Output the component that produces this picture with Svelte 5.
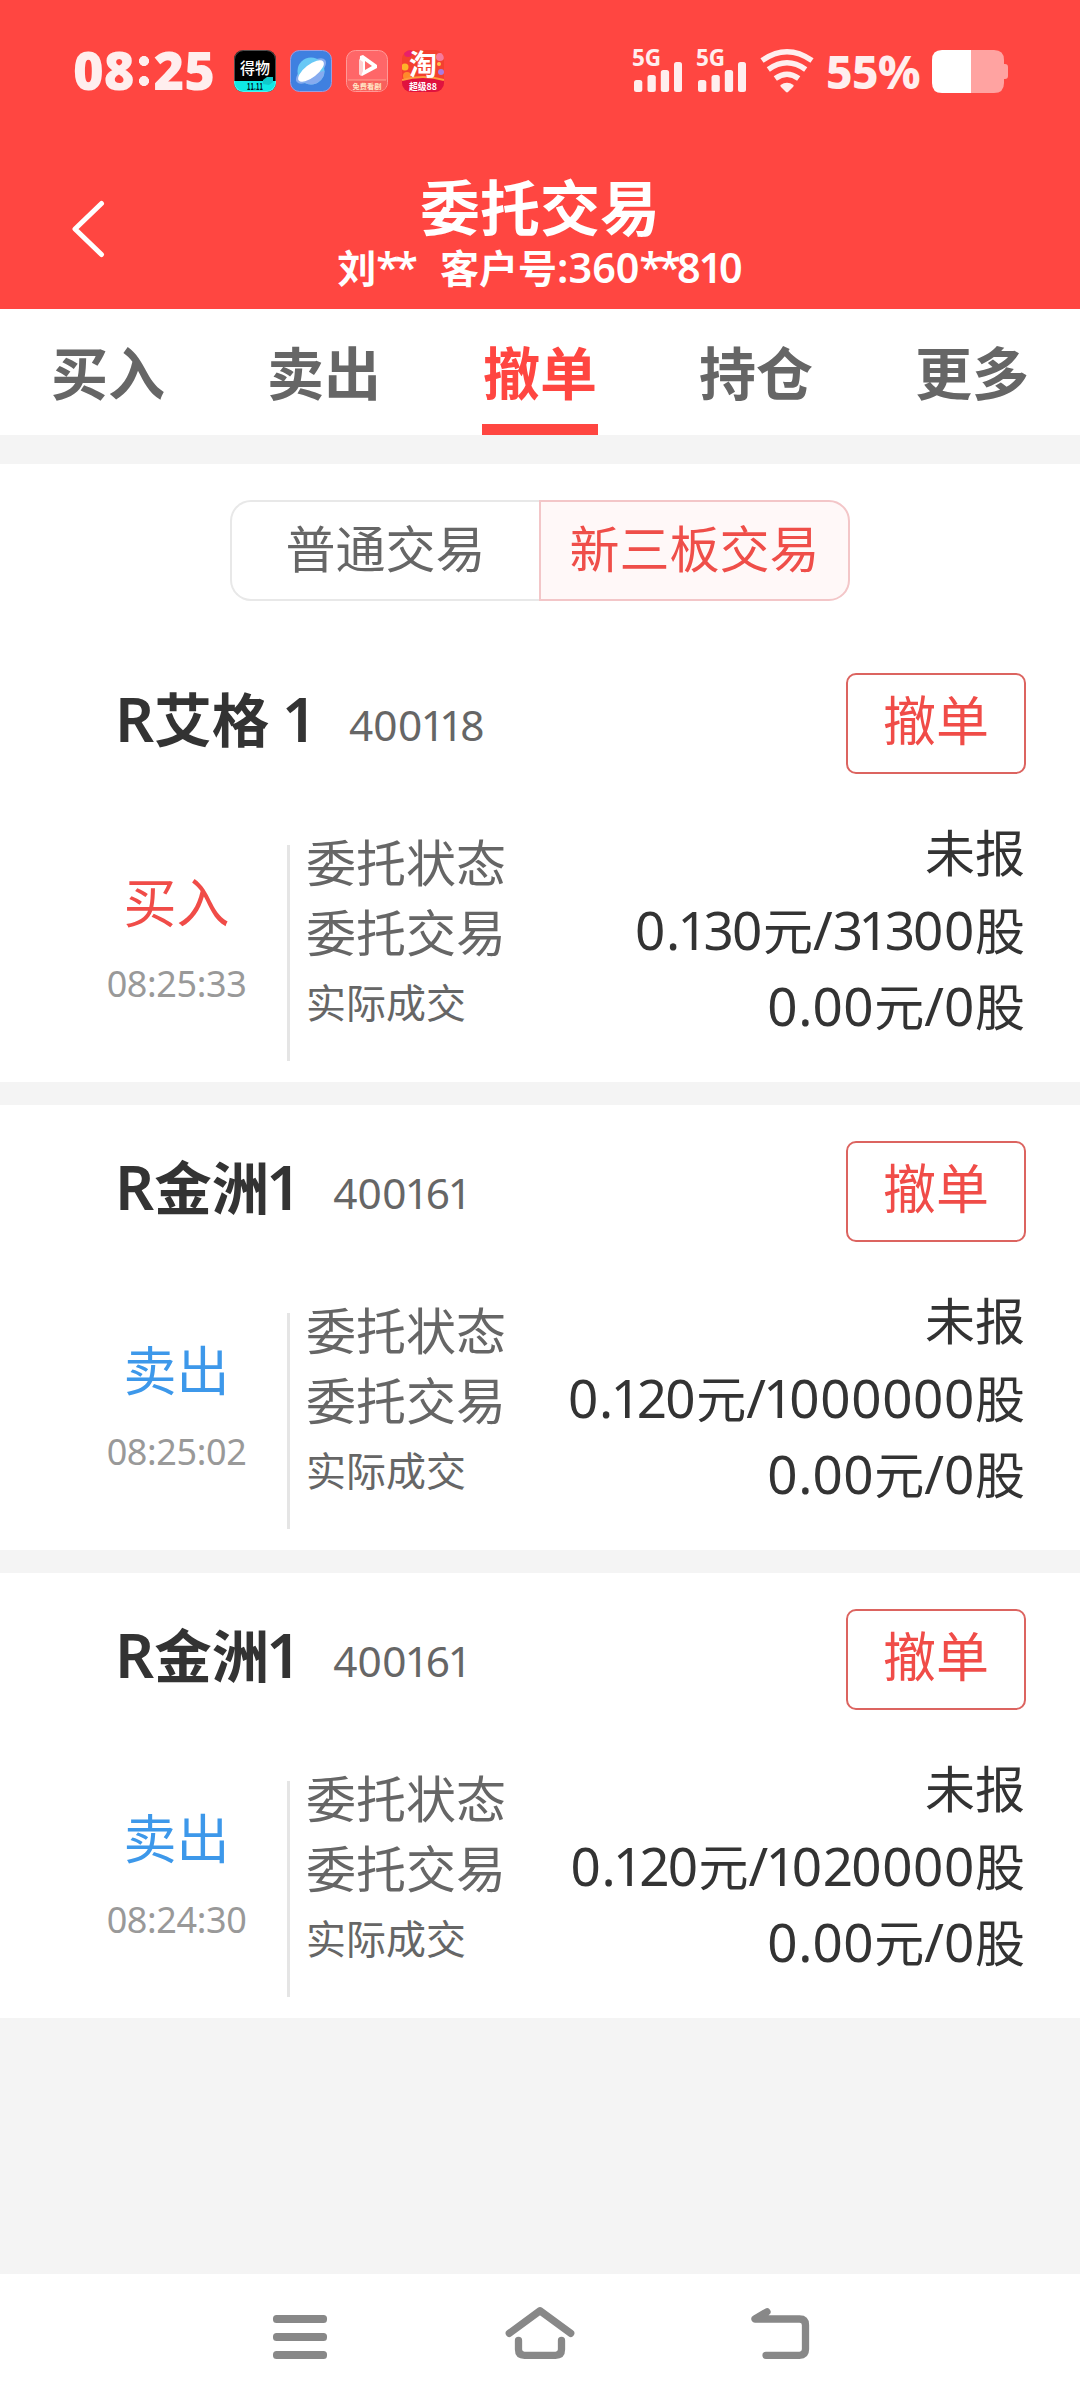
<script>
  const tabs = ['买入', '卖出', '撤单', '持仓', '更多'];
  let activeTab = $state('撤单');
  let market = $state('新三板交易');

  const orders = [
    { name: 'R艾格 1', code: '400118', side: '买入', time: '08:25:33', status: '未报', order: '0.130元/31300股', deal: '0.00元/0股' },
    { name: 'R金洲1', code: '400161', side: '卖出', time: '08:25:02', status: '未报', order: '0.120元/1000000股', deal: '0.00元/0股' },
    { name: 'R金洲1', code: '400161', side: '卖出', time: '08:24:30', status: '未报', order: '0.120元/1020000股', deal: '0.00元/0股' }
  ];

  const kinds = { '1': 'one', '0': 'zero', '2': 'mid', '3': 'mid', '*': 'star' };

  // Splits a string into runs so Latin digits can be set slightly larger than the Han text,
  // and the figures can be given proportional spacing.
  function runs(text) {
    return (text.match(/1+|0+|[23]+|\*+|[\x20-\x29\x2b-\x2f\x34-\x7e]+|[^\x20-\x7e]+/g) ?? []).map((t) => ({
      t,
      kind: kinds[t[0]] ?? (t.charCodeAt(0) < 128 ? 'lat' : 'han')
    }));
  }
</script>

{#snippet mixed(text)}{#each runs(text) as r}<span class={r.kind}>{r.t}</span>{/each}{/snippet}

{#snippet signal()}
  <span class="signal">
    <b>5G</b>
    <svg width="48" height="30" viewBox="0 0 48 30" fill="#ffeeee">
      <rect x="0" y="18" width="8.3" height="12" rx="2.5" />
      <rect x="13.5" y="13" width="8.3" height="17" rx="2.5" />
      <rect x="26.8" y="8" width="8.3" height="22" rx="2.5" />
      <rect x="40" y="0" width="8" height="30" rx="2.5" />
    </svg>
  </span>
{/snippet}

<div class="screen">
  <header>
    <div class="status">
      <span class="clock">08<i></i>25</span>
      <div class="apps">
        <svg width="42" height="42" viewBox="0 0 42 42">
          <defs><clipPath id="c1"><rect width="42" height="42" rx="9" /></clipPath></defs>
          <g clip-path="url(#c1)">
            <rect width="42" height="42" fill="#000" />
            <rect y="31" width="42" height="11" fill="#0fe9e6" />
            <path d="M29 30l4-3 6 0v5l-4 3-6-1z" fill="#11c9cc" />
          </g>
          <text x="21" y="23.500" class="han-icon light" font-size="16" fill="#fff" textLength="30" lengthAdjust="spacingAndGlyphs">得物</text>
          <text x="21" y="39.500" class="han-icon" font-size="9.500" fill="#012" textLength="16" lengthAdjust="spacingAndGlyphs">11.11</text>
          <rect x=".5" y=".5" width="41" height="41" rx="9" fill="none" stroke="#fff" stroke-opacity=".3" />
        </svg>
        <svg width="42" height="42" viewBox="0 0 42 42">
          <rect x=".5" y=".5" width="41" height="41" rx="9" fill="#3f80e0" stroke="#9a9ce0" />
          <ellipse cx="21" cy="21" rx="18" ry="8" transform="rotate(-38 21 21)" fill="#86abef" />
          <circle cx="21" cy="21" r="13.5" fill="#68c8f5" />
          <path d="M8.5 26a13.5 13.5 0 0 0 26-5z" fill="#86abef" />
          <ellipse cx="21" cy="21" rx="15.5" ry="6.500" transform="rotate(-38 21 21)" fill="#fff" />
        </svg>
        <svg width="42" height="42" viewBox="0 0 42 42">
          <rect x=".5" y=".5" width="41" height="41" rx="9" fill="#ff6668" stroke="#ff9a98" />
          <path d="M1 30h40v3a8 8 0 0 1-8 8H9a8 8 0 0 1-8-8z" fill="#f8605c" />
          <path d="M2 30h38" stroke="#ffb0a0" stroke-width=".8" />
          <path d="M14 6l3-1 14 10v3L16 26l-3-2z" fill="#fff" />
          <path d="M19 11v9l7-4z" fill="#ff6a6c" />
          <path d="M13 24V9l4 3v9l-2 5z" fill="#ffd0d2" />
          <text x="21" y="38.500" class="han-icon" font-size="7.200" fill="#ffe8c8">免费看剧</text>
        </svg>
        <svg width="42" height="42" viewBox="0 0 42 42">
          <defs><clipPath id="c4"><rect width="42" height="42" rx="9" /></clipPath></defs>
          <g clip-path="url(#c4)">
            <rect width="42" height="42" fill="#f4402f" />
            <circle cx="6" cy="3" r="4" fill="#e8206a" />
            <circle cx="3" cy="17" r="3.500" fill="#ffb429" />
            <circle cx="38" cy="7" r="4" fill="#f77a9a" />
            <circle cx="39" cy="22" r="3" fill="#a97be0" />
            <circle cx="5" cy="26" r="4" fill="#ff8a2a" />
            <circle cx="37" cy="14" r="2" fill="#ffc04a" />
            <path d="M0 30q21-6 42 0v12H0z" fill="#e0123f" />
            <path d="M0 30q21-6 42 0" fill="none" stroke="#ff9b3e" stroke-width="2" />
          </g>
          <text x="21" y="25" class="han-icon" font-size="28" fill="#fff">淘</text>
          <text x="21" y="40" class="han-icon" font-size="9.500" fill="#fff" textLength="28" lengthAdjust="spacingAndGlyphs">超级88</text>
        </svg>
      </div>
      <div class="sys">
        {@render signal()}
        {@render signal()}
        <svg class="wifi" width="54" height="44" viewBox="0 0 54 44" fill="none" stroke="#ffeeee" stroke-width="5.4">
          <path d="M2 11.5Q27-6.2 52 11.5" />
          <path d="M8.3 20.5Q27 7.2 45.7 20.5" />
          <path d="M15.3 29.5Q27 21 38.700 29.5" />
          <path d="M20.500 36Q27 31.500 33.500 36Q34 37 33 38L28 43Q27 43.800 26 43L21 38Q20 37 20.500 36z" fill="#ffeeee" stroke="none" />
        </svg>
        <span class="pct">55%</span>
        <svg class="batt" width="76" height="43" viewBox="0 0 76 43">
          <path d="M39 0h23q10 0 10 10v4h1q3 0 3 3v9q0 3-3 3h-1v4q0 10-10 10H39z" fill="#ffa3a1" />
          <path d="M39 0H10Q0 0 0 10v23q0 10 10 10h29z" fill="#fff" />
        </svg>
      </div>
    </div>
    <div class="titlebar">
      <button class="back" aria-label="返回">
        <svg width="34" height="58" viewBox="0 0 34 58" fill="none" stroke="#fff" stroke-width="5" stroke-linecap="round" stroke-linejoin="round">
          <path d="M30.500 3.500L4 29l26.500 25.500" />
        </svg>
      </button>
      <div class="titles">
        <h1>委托交易</h1>
        <p>{@render mixed('刘**')}<span class="acct">{@render mixed('客户号:360**810')}</span></p>
      </div>
    </div>
  </header>

  <nav class="tabs">
    {#each tabs as t}
      <button class:active={t === activeTab} onclick={() => (activeTab = t)}><span>{t}</span></button>
    {/each}
  </nav>

  <main>
    <div class="switch">
      {#each ['普通交易', '新三板交易'] as m}
        <button class:on={m === market} onclick={() => (market = m)}>{m}</button>
      {/each}
    </div>

    {#each orders as o}
      <article>
        <div class="head">
          <h2>{@render mixed(o.name)}</h2>
          <span class="code">{@render mixed(o.code)}</span>
          <button class="cancel">撤单</button>
        </div>
        <div class="body">
          <div class="side">
            <strong class:sell={o.side === '卖出'}>{o.side}</strong>
            <time>{o.time}</time>
          </div>
          <div class="rule"></div>
          <div class="labels">
            <span>委托状态</span>
            <span>委托交易</span>
            <span class="small">实际成交</span>
          </div>
          <div class="values">
            <span>{o.status}</span>
            <span>{@render mixed(o.order)}</span>
            <span>{@render mixed(o.deal)}</span>
          </div>
        </div>
      </article>
    {/each}
  </main>

  <footer>
    <svg width="80" height="60" viewBox="260 2300 80 60" fill="#888">
      <rect x="273" y="2315" width="54" height="8" rx="3.500" />
      <rect x="273" y="2333" width="54" height="8" rx="3.500" />
      <rect x="273" y="2351" width="54" height="8" rx="3.500" />
    </svg>
    <svg width="80" height="60" viewBox="500 2300 80 60" fill="none" stroke="#888" stroke-width="7.300" stroke-linecap="round" stroke-linejoin="round">
      <path d="M509.300 2333.300L540 2310.800l30.700 22.500" />
      <path d="M518.500 2340.500v9q0 5.800 6 5.800h31q6 0 6-5.800v-9" />
    </svg>
    <svg width="80" height="60" viewBox="740 2300 80 60" fill="none" stroke="#888" stroke-width="7.300" stroke-linecap="round" stroke-linejoin="round">
      <path d="M767 2311.800L755 2319h44.500q6 0 6 6v24.300q0 6-6 6H766" />
    </svg>
  </footer>
</div>

<style>
  :global(body) { margin: 0; }
  .screen {
    width: 1080px;
    height: 2400px;
    display: flex;
    flex-direction: column;
    background: #f4f4f4;
    font-family: 'Noto Sans', 'Noto Sans CJK SC', sans-serif;
    color: #333;
    overflow: hidden;
  }
  button {
    font: inherit;
    border: 0;
    padding: 0;
    margin: 0;
    background: none;
    color: inherit;
  }
  h1, h2, p { margin: 0; }
  svg { display: block; flex: none; overflow: visible; }
  .lat, .one, .zero, .mid, .star { font-size: 1.06em; }
  .one { margin-left: -0.05em; letter-spacing: -0.13em; margin-right: 0.05em; }
  .zero { letter-spacing: 0.012em; }
  .mid { letter-spacing: -0.035em; }
  .star { letter-spacing: -0.09em; }

  header { height: 309px; background: #ff4641; color: #fff; flex: none; }
  .status {
    height: 142px;
    box-sizing: border-box;
    padding: 0 72px 0 73px;
    display: flex;
    align-items: center;
    color: #ffeeee;
  }
  .clock {
    width: 161px;
    display: flex;
    align-items: center;
    font-size: 52.500px;
    font-weight: 900;
    line-height: 60px;
    padding-bottom: 2px;
  }
  .clock i {
    width: 10px;
    height: 30px;
    margin: 2px 4.500px 0;
    background: radial-gradient(circle at 5px 5px, #ffeeee 4.7px, transparent 5.3px),
      radial-gradient(circle at 5px 25px, #ffeeee 4.7px, transparent 5.3px);
  }
  .apps { display: flex; gap: 14px; }
  .han-icon {
    font-family: 'Noto Sans CJK SC', sans-serif;
    font-weight: 700;
    text-anchor: middle;
  }
  .light { font-weight: 500; }
  .sys { margin-left: auto; display: flex; align-items: center; }
  .signal {
    width: 50px;
    height: 42px;
    margin-right: 14px;
    display: grid;
  }
  .signal > * { grid-area: 1 / 1; }
  .signal b { font-size: 22.500px; line-height: 16px; }
  .signal svg { align-self: end; margin-left: 2px; }
  .wifi { margin-right: 12px; }
  .pct { width: 106px; font-size: 46px; font-weight: 800; letter-spacing: -0.6px; line-height: 60px; white-space: nowrap; }

  .titlebar { display: flex; align-items: flex-start; padding-left: 71px; }
  .back { margin-top: 58px; height: 58px; }
  .titles { flex: 1; margin-right: 105px; text-align: center; }
  h1 { margin-top: 32px; font-size: 60px; line-height: 68px; font-weight: 700; }
  .titles p { font-size: 39px; line-height: 51px; font-weight: 600; white-space: nowrap; }
  .titles .zero, .titles .mid { letter-spacing: 0; }
  .acct { margin-left: 26px; }

  .tabs { height: 126px; flex: none; display: flex; background: #fff; }
  .tabs button {
    flex: 1;
    display: flex;
    justify-content: center;
    font-size: 57px;
    font-weight: 700;
    line-height: 128px;
    color: #666;
  }
  .tabs span { width: 116px; box-sizing: border-box; }
  .tabs .active { color: #ff4641; }
  .tabs .active span { border-bottom: 11px solid #ff4641; height: 126px; }

  main { margin-top: 29px; display: flex; flex-direction: column; }
  .switch { height: 173px; box-sizing: border-box; padding: 36px 230px; display: flex; background: #fff; }
  .switch button {
    flex: 1;
    box-sizing: border-box;
    border: 2px solid #e8e8e8;
    border-right: 0;
    border-radius: 21px 0 0 21px;
    font-size: 50px;
    line-height: 94px;
    padding-bottom: 3px;
    color: #666;
  }
  .switch button + button { border-right: 2px solid #e8e8e8; border-radius: 0 21px 21px 0; }
  .switch .on { background: #fff8f8; border-color: #f3c6c8 !important; color: #ef4e49; }

  article { height: 445px; background: #fff; }
  article + article { margin-top: 23px; }
  .head { display: flex; padding: 36px 54px 0 115px; height: 101px; line-height: 91px; }
  h2 { font-size: 57.500px; font-weight: 600; white-space: pre; }
  .code { margin-left: 37px; padding-top: 6px; font-size: 40px; color: #666; }
  .cancel {
    margin-left: auto;
    width: 180px;
    height: 101px;
    border: 2px solid #dc6460;
    border-radius: 10px;
    font-size: 53px;
    line-height: 92px;
    padding-bottom: 5px;
    color: #f04c48;
  }
  .body { display: flex; padding-right: 55px; }
  .side { width: 221px; margin-left: 66px; padding-top: 89px; text-align: center; }
  .side strong { display: block; font-size: 53px; font-weight: 400; line-height: 80px; color: #f04c48; }
  .side .sell { color: #3d98ea; }
  time { display: block; font-size: 36px; line-height: 82px; letter-spacing: -0.4px; color: #999; }
  .rule { width: 3px; height: 216px; margin-top: 71px; background: #e5e5e5; }
  .labels { padding: 54px 0 0 16px; color: #666; font-size: 50px; }
  .labels span { display: block; line-height: 70px; height: 70px; }
  .labels .small { font-size: 40px; }
  .values { margin-left: auto; padding-top: 41px; text-align: right; font-size: 50px; line-height: 76.500px; white-space: nowrap; }
  .values > span { display: block; height: 76.500px; }

  footer {
    margin-top: auto;
    height: 126px;
    flex: none;
    box-sizing: border-box;
    padding: 26px 260px 0;
    display: flex;
    justify-content: space-between;
    background: #fff;
  }
</style>
